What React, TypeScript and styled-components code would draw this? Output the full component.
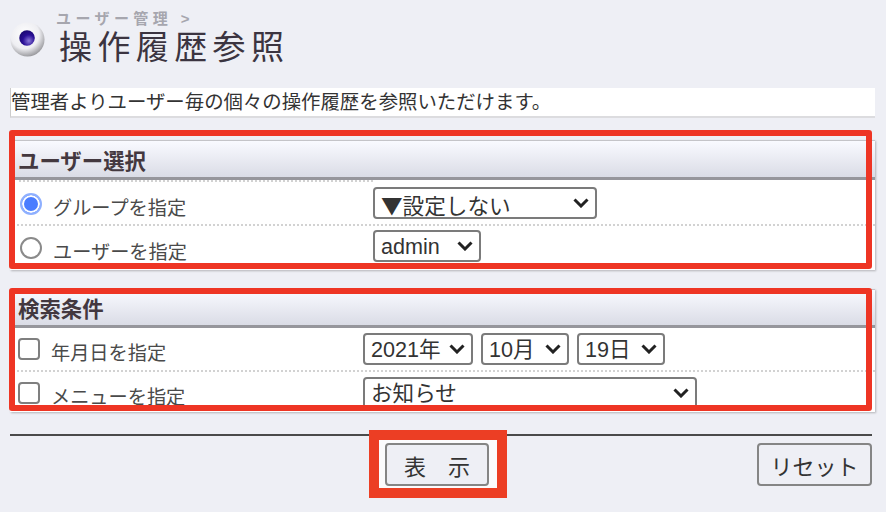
import styled, { createGlobalStyle } from 'styled-components';

const GlobalStyle = createGlobalStyle`
  html, body {
    margin: 0;
    padding: 0;
    background: #eeeff5;
    overflow: hidden;
  }
  body {
    font-family: 'Liberation Sans', 'Noto Sans CJK JP', sans-serif;
    color: #333;
  }
`;

const chevron = `url("data:image/svg+xml,%3Csvg xmlns='http://www.w3.org/2000/svg' width='16' height='10' viewBox='0 0 16 10'%3E%3Cpath d='M1.5 1.5l6.5 6.5 6.5-6.5' fill='none' stroke='%23222' stroke-width='3'/%3E%3C/svg%3E")`;

const Page = styled.div`
  width: 886px;
  height: 512px;
  padding: 10px 11px 0 10px;
  box-sizing: border-box;
  overflow: hidden;
`;

const Heading = styled.header`
  display: flex;
  align-items: flex-start;
  height: 78px;
`;

const IconWrap = styled.div`
  width: 36px;
  margin-top: 12px;
  flex-shrink: 0;
`;

const Titles = styled.div`
  display: flex;
  flex-direction: column;
  margin-left: 10px;
`;

const Crumb = styled.div`
  font-size: 15px;
  line-height: 17px;
  font-weight: 700;
  letter-spacing: 4.4px;
  color: #a6a6ae;
`;

const Title = styled.h1`
  margin: 1px 0 0 3px;
  font-size: 33px;
  line-height: 40px;
  font-weight: 400;
  letter-spacing: 5.4px;
  color: #3b3440;
`;

const Description = styled.div`
  height: 30px;
  background: #fff;
  border-left: 1px solid #ccc;
  border-bottom: 2px solid #dcdcdf;
  font-size: 19.4px;
  line-height: 28px;
  color: #333;
  box-sizing: border-box;
  white-space: nowrap;
`;

const Section = styled.section<{ $top: number }>`
  position: relative;
  margin-top: ${(p) => p.$top}px;
  background: #fff;
  box-shadow: 1px 1px 2px rgba(0, 0, 0, 0.25);
`;

const Highlight = styled.div<{ $inset: string }>`
  position: absolute;
  inset: ${(p) => p.$inset};
  border: 6px solid #ee3524;
  border-radius: 3px;
  pointer-events: none;
`;

const SectionHead = styled.div<{ $height: number }>`
  height: ${(p) => p.$height}px;
  box-sizing: border-box;
  padding-left: 8px;
  display: flex;
  align-items: center;
  background: linear-gradient(#f9faff, #dadce6);
  border-top: 1px solid #c4c4c8;
  border-bottom: 3px solid #96969c;
  font-size: 21.4px;
  font-weight: 700;
  color: #43383f;
`;

const Row = styled.div<{ $height: number; $labelWidth: number; $dashed?: boolean }>`
  display: grid;
  grid-template-columns: ${(p) => p.$labelWidth}px 1fr;
  height: ${(p) => p.$height}px;
  padding-left: 9px;
  overflow: hidden;
  border-top: ${(p) => (p.$dashed ? '2px dotted #d2d2d2' : 'none')};
  box-sizing: border-box;
`;

const LabelCell = styled.label<{ $top: number; $dotted?: boolean }>`
  display: flex;
  align-items: flex-start;
  padding-top: ${(p) => p.$top}px;
  border-top: ${(p) => (p.$dotted ? '2px dotted #d2d2d2' : 'none')};
  font-size: 19.2px;
  line-height: 28px;
  color: #4a4a4a;
`;

const LabelText = styled.span`
  margin: 2px 0 0 11px;
`;

const Radio = styled.span<{ $checked?: boolean }>`
  width: 22px;
  height: 22px;
  margin-left: 1px;
  flex-shrink: 0;
  box-sizing: border-box;
  border-radius: 50%;
  border: 2px solid ${(p) => (p.$checked ? '#8fb0ff' : '#8a8a8a')};
  background: ${(p) => (p.$checked ? '#4a7dff' : '#fff')};
  box-shadow: ${(p) => (p.$checked ? 'inset 0 0 0 2px #fff' : 'none')};
`;

const Checkbox = styled.span`
  width: 22px;
  height: 22px;
  margin-left: -1px;
  flex-shrink: 0;
  box-sizing: border-box;
  border-radius: 4px;
  border: 2px solid #7f7f7f;
  background: #fff;
`;

const ControlCell = styled.div<{ $top: number }>`
  display: flex;
  gap: 8px;
  padding-top: ${(p) => p.$top}px;
  align-items: flex-start;
`;

const Select = styled.select<{ $width: number; $cjk?: boolean }>`
  appearance: none;
  width: ${(p) => p.$width}px;
  height: 32px;
  box-sizing: border-box;
  padding: 0 0 0 6px;
  border: 2px solid #7b7b7b;
  border-radius: 4px;
  background: #fff ${chevron} no-repeat right 6px center;
  font-family: ${(p) => (p.$cjk ? "'Noto Sans CJK JP', sans-serif" : 'inherit')};
  font-size: 21.6px;
  color: #333;
`;

const Rule = styled.hr`
  margin: 22px 3px 0 0;
  border: 0;
  border-top: 2px solid #4a4a4a;
`;

const Footer = styled.div`
  position: relative;
  display: flex;
  justify-content: space-between;
  padding: 7px 3px 0 375px;
`;

const ButtonFrame = styled.div`
  position: absolute;
  left: 359px;
  top: -6px;
  width: 138px;
  height: 68px;
  box-sizing: border-box;
  border: 10px solid #ec3e24;
  background: #fbfbfd;
`;

const Button = styled.button<{ $width: number }>`
  position: relative;
  width: ${(p) => p.$width}px;
  height: 43px;
  padding: 0;
  border: 2px solid #858585;
  border-radius: 4px;
  background: #eeeff5;
  font-family: inherit;
  font-size: 22px;
  white-space: pre;
  color: #333;
`;

const SphereIcon = () => (
  <svg width="35" height="35" viewBox="0 0 36 36">
    <defs>
      <radialGradient id="shell" cx="42%" cy="35%" r="70%">
        <stop offset="0%" stopColor="#ffffff" />
        <stop offset="60%" stopColor="#eeeef2" />
        <stop offset="100%" stopColor="#8c8c90" />
      </radialGradient>
      <radialGradient id="core" cx="62%" cy="68%" r="70%">
        <stop offset="0%" stopColor="#8a78d8" />
        <stop offset="55%" stopColor="#2a0f96" />
        <stop offset="100%" stopColor="#1a0870" />
      </radialGradient>
    </defs>
    <circle cx="18" cy="18" r="17.5" fill="url(#shell)" />
    <circle cx="17.5" cy="16.5" r="8" fill="url(#core)" />
  </svg>
);

const App = () => (
  <Page>
    <GlobalStyle />
    <Heading>
      <IconWrap>
        <SphereIcon />
      </IconWrap>
      <Titles>
        <Crumb>ユーザー管理 &gt;</Crumb>
        <Title>操作履歴参照</Title>
      </Titles>
    </Heading>
    <Description>管理者よりユーザー毎の個々の操作履歴を参照いただけます。</Description>

    <Section $top={22}>
      <SectionHead $height={40}>ユーザー選択</SectionHead>
      <Row $height={44} $labelWidth={354}>
        <LabelCell $top={11} $dotted>
          <Radio $checked />
          <LabelText>グループを指定</LabelText>
        </LabelCell>
        <ControlCell $top={7}>
          <Select $width={224} $cjk defaultValue="none">
            <option value="none">▼設定しない</option>
          </Select>
        </ControlCell>
      </Row>
      <Row $height={46} $labelWidth={354} $dashed>
        <LabelCell $top={11}>
          <Radio />
          <LabelText>ユーザーを指定</LabelText>
        </LabelCell>
        <ControlCell $top={4}>
          <Select $width={108} defaultValue="admin">
            <option value="admin">admin</option>
          </Select>
        </ControlCell>
      </Row>
      <Highlight $inset="-10px 3px 1px -1px" />
    </Section>

    <Section $top={19}>
      <SectionHead $height={39}>検索条件</SectionHead>
      <Row $height={42} $labelWidth={344}>
        <LabelCell $top={10}>
          <Checkbox />
          <LabelText>年月日を指定</LabelText>
        </LabelCell>
        <ControlCell $top={5}>
          <Select $width={110} defaultValue="2021">
            <option value="2021">2021年</option>
          </Select>
          <Select $width={88} defaultValue="10">
            <option value="10">10月</option>
          </Select>
          <Select $width={88} defaultValue="19">
            <option value="19">19日</option>
          </Select>
        </ControlCell>
      </Row>
      <Row $height={42} $labelWidth={344} $dashed>
        <LabelCell $top={10}>
          <Checkbox />
          <LabelText>メニューを指定</LabelText>
        </LabelCell>
        <ControlCell $top={5}>
          <Select $width={334} defaultValue="info">
            <option value="info">お知らせ</option>
          </Select>
        </ControlCell>
      </Row>
      <Highlight $inset="-1px 3px 1px -1px" />
    </Section>

    <Rule />
    <Footer>
      <ButtonFrame />
      <Button $width={104}>表　示</Button>
      <Button $width={115}>リセット</Button>
    </Footer>
  </Page>
);

export default App;
